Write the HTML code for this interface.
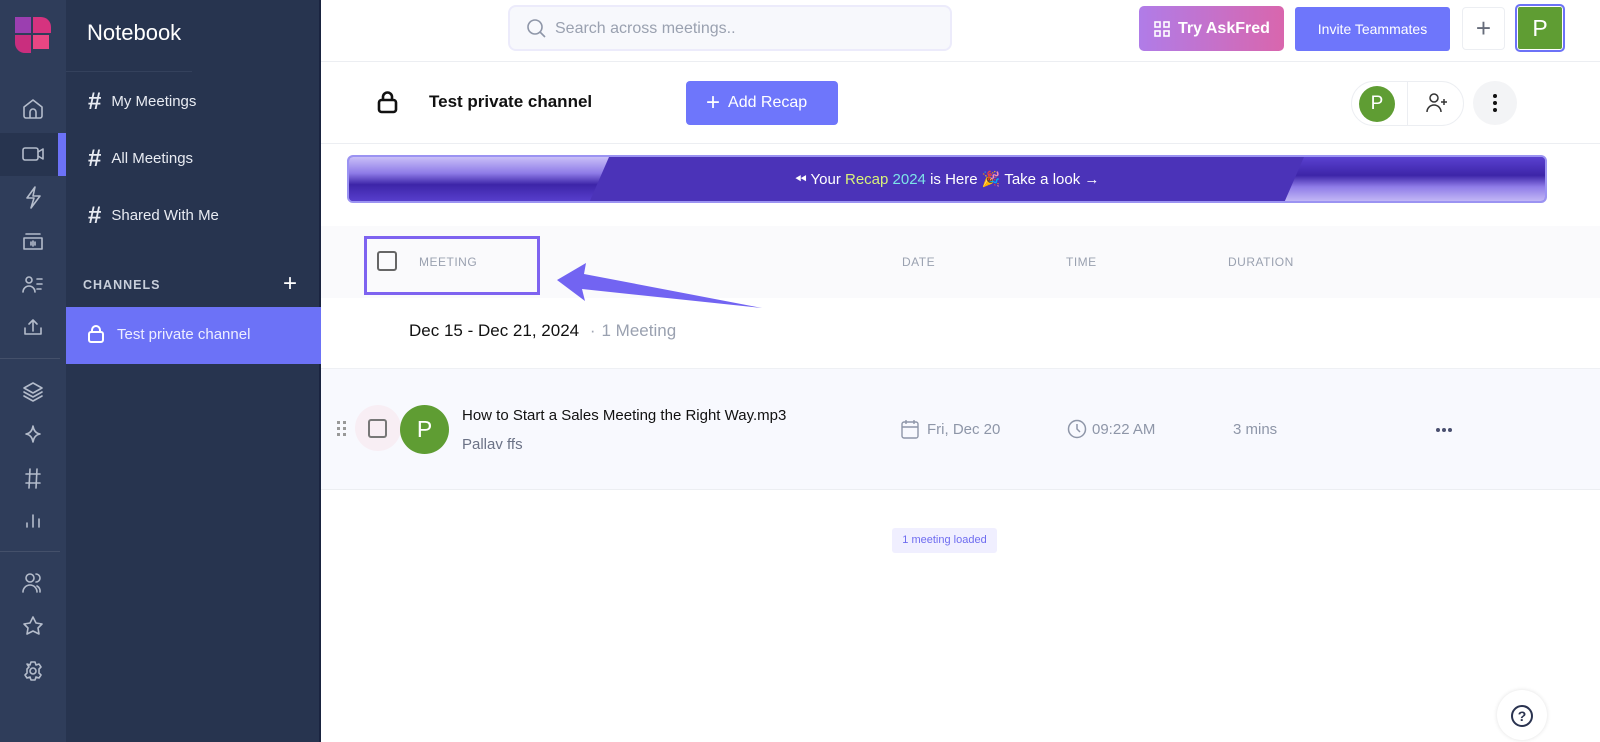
<!DOCTYPE html>
<html><head><meta charset="utf-8"><style>
*{box-sizing:border-box;margin:0;padding:0}
body{width:1600px;height:742px;overflow:hidden;font-family:"Liberation Sans",sans-serif;background:#fff;position:relative}
.abs{position:absolute}
.rail{left:0;top:0;width:66px;height:742px;background:#2f3d5a}
.panel{left:66px;top:0;width:255px;height:742px;background:#27344f;border-right:2px solid #1a2440}
.nav{position:absolute;left:22px;color:#e8ebf2;font-size:15px}
.nav b{font-size:24px;margin-right:10px;vertical-align:-3px}
svg{display:block}
.g{color:#8e96a8}
</style></head><body>
<div class="abs rail"></div>
<div class="abs panel"></div>
<svg class="abs" style="left:15px;top:17px" width="36" height="36" viewBox="0 0 36 36">
<path d="M0 0h16v16H0z" fill="#9b3fb0"/><path d="M18 0h8a10 10 0 0 1 10 10v6H18z" fill="#d6337f"/>
<path d="M0 18h16v18h-6A10 10 0 0 1 0 26z" fill="#c92e7e"/><path d="M18 18h16v14H18z" fill="#e84683"/></svg>
<div class="abs" style="left:0;top:133px;width:58px;height:43px;background:#27344f"></div>
<div class="abs" style="left:58px;top:133px;width:8px;height:43px;background:#6c72f7"></div>
<div class="abs" style="left:0;top:358px;width:60px;height:1px;background:#44506a"></div>
<div class="abs" style="left:0;top:551px;width:60px;height:1px;background:#44506a"></div>
<svg class="abs" style="left:0;top:0" width="66" height="742" fill="none" stroke="#b4bccb" stroke-width="1.6" stroke-linecap="round" stroke-linejoin="round">
<path d="M24 116v-9l9-7 9 7v9a2 2 0 0 1-2 2H26a2 2 0 0 1-2-2zM30 118v-6a3 3 0 0 1 6 0v6"/>
<rect x="23" y="148" width="15" height="12" rx="2"/><path d="M38 152l5-3v10l-5-3"/>
<path d="M35 187l-8 11h7l-3 10 9-12h-7z"/>
<path d="M26 234h14M24 238h18v11H24zM33 241v5M31 242v3M35 242v3"/>
<circle cx="29" cy="280" r="3"/><path d="M23 292a6 6 0 0 1 12 0M37 279h5M37 284h5M37 289h4"/>
<path d="M25 328v6h16v-6M33 331v-11M29 324l4-4 4 4"/>
<path d="M33 383l-9 5 9 5 9-5zM24 392l9 5 9-5M24 396l9 5 9-5"/>
<path d="M33 426q1 7 7 8q-6 1-7 8q-1-7-7-8q6-1 7-8z"/>
<path d="M26 474h14M26 483h14M30 469l-1 19M37 469l-1 19"/>
<path d="M27 527v-4M33 527v-12M39 527v-8"/>
<circle cx="30" cy="578" r="4"/><path d="M23 592a7 7 0 0 1 14 0M36 574a4 4 0 0 1 0 8M40 592a6 6 0 0 0-3-6"/>
<path d="M33 617l3 6 6 1-4 4 1 6-6-3-6 3 1-6-4-4 6-1z"/>
<circle cx="33" cy="671" r="3"/><path d="M31 662h4l1 3 3-1 2 3-2 2v4l2 2-2 3-3-1-1 3h-4l-1-3-3 1-2-3 2-2v-4l2-2-2-3 3 1z"/>
</svg>
<div class="abs" style="left:87px;top:20px;color:#fff;font-size:22px">Notebook</div>
<div class="abs" style="left:66px;top:71px;width:126px;height:1px;background:#34415c"></div>
<div class="nav" style="left:88px;top:88px"><b>#</b>My Meetings</div>
<div class="nav" style="left:88px;top:145px"><b>#</b>All Meetings</div>
<div class="nav" style="left:88px;top:202px"><b>#</b>Shared With Me</div>
<div class="abs" style="left:83px;top:278px;color:#c8cfdb;font-size:12.5px;font-weight:bold;letter-spacing:1px">CHANNELS</div>
<div class="abs" style="left:283px;top:270px;color:#fff;font-size:24px">+</div>
<div class="abs" style="left:66px;top:307px;width:255px;height:57px;background:#6c72f7"></div>
<svg class="abs" style="left:88px;top:325px" width="16" height="18" fill="none" stroke="#fff" stroke-width="2"><rect x="1" y="7" width="14" height="10" rx="2"/><path d="M4 7V5a4 4 0 0 1 8 0v2"/></svg>
<div class="abs" style="left:117px;top:326px;color:#eef;font-size:15px">Test private channel</div>
<div class="abs" style="left:321px;top:61px;width:1279px;height:1px;background:#eceef2"></div>
<div class="abs" style="left:508px;top:5px;width:444px;height:46px;background:#f7f8fc;border:2px solid #ecebfb;border-radius:8px"></div>
<svg class="abs" style="left:526px;top:18px" width="20" height="20" fill="none" stroke="#8e96a8" stroke-width="1.6"><circle cx="9" cy="9" r="7"/><path d="M14 14l5 5"/></svg>
<div class="abs" style="left:555px;top:20px;font-size:16px;color:#9aa1b0">Search across meetings..</div>
<div class="abs" style="left:1139px;top:6px;width:145px;height:45px;border-radius:5px;background:linear-gradient(90deg,#b07ce8,#d966ad);display:flex;align-items:center;color:#fff;font-size:16px;font-weight:bold">
<svg style="margin:0 8px 0 15px" width="16" height="16" fill="none" stroke="#fff" stroke-width="1.6"><rect x="1" y="1" width="5" height="5"/><rect x="10" y="1" width="5" height="5"/><rect x="1" y="10" width="5" height="5"/><rect x="10" y="10" width="5" height="5"/></svg>Try AskFred</div>
<div class="abs" style="left:1295px;top:7px;width:155px;height:44px;border-radius:3px;background:#6e76fb;color:#fff;font-size:14px;text-align:center;line-height:44px">Invite Teammates</div>
<div class="abs" style="left:1462px;top:7px;width:43px;height:43px;border:1px solid #eceef2;border-radius:4px;color:#666c7a;font-size:26px;text-align:center;line-height:40px">+</div>
<div class="abs" style="left:1515px;top:4px;width:50px;height:48px;border:2px solid #6c72f7;border-radius:5px;background:#5f9d33;color:#fff;font-size:23px;text-align:center;line-height:44px;box-shadow:inset 0 0 0 1px #fff">P</div>
<svg class="abs" style="left:377px;top:90px" width="22" height="24" fill="none" stroke="#111" stroke-width="2.6"><rect x="2" y="10" width="17" height="12" rx="2.5"/><path d="M6 10V7a4.5 4.5 0 0 1 9 0v3"/></svg>
<div class="abs" style="left:429px;top:92px;color:#111;font-size:17px;font-weight:bold">Test private channel</div>
<div class="abs" style="left:686px;top:81px;width:152px;height:44px;background:#6e76fb;border-radius:4px;color:#fff;font-size:16px;line-height:44px"><span style="font-size:24px;margin:0 8px 0 20px;vertical-align:-3px">+</span>Add Recap</div>
<div class="abs" style="left:1351px;top:81px;width:113px;height:45px;border:1px solid #eceef2;border-radius:23px"></div>
<div class="abs" style="top:82px;width:1px;height:43px;background:#eceef2;left:1407px"></div>
<div class="abs" style="left:1359px;top:86px;width:36px;height:36px;border-radius:50%;background:#5f9d33;color:#fff;font-size:19px;text-align:center;line-height:36px">P</div>
<svg class="abs" style="left:1425px;top:92px" width="24" height="22" fill="none" stroke="#333" stroke-width="1.5"><circle cx="9" cy="6" r="4"/><path d="M2 20a7 7 0 0 1 14 0M19 7v6M16 10h6"/></svg>
<div class="abs" style="left:1473px;top:81px;width:44px;height:44px;border-radius:50%;background:#f3f4f6"></div>
<div class="abs" style="left:1493px;top:94px;width:4px;height:4px;border-radius:50%;background:#111;box-shadow:0 7px 0 #111,0 14px 0 #111"></div>
<div class="abs" style="left:321px;top:143px;width:1279px;height:1px;background:#eceef2"></div>
<div class="abs" style="left:347px;top:155px;width:1200px;height:48px;border:2px solid #9b93f2;border-radius:6px;background:#4b33b8;overflow:hidden">
<div class="abs" style="left:0;top:0;width:260px;height:46px;background:linear-gradient(180deg,#c9bff7 0%,#8f7ce8 35%,#3d25a8 60%,#5a41d0 100%);clip-path:polygon(0 0,260px 0,240px 46px,0 46px)"></div>
<div class="abs" style="left:935px;top:0;width:265px;height:46px;background:linear-gradient(0deg,#c9bff7 0%,#8f7ce8 35%,#3d25a8 60%,#5a41d0 100%);clip-path:polygon(20px 0,265px 0,265px 46px,0 46px)"></div>
<div class="abs" style="left:0;top:13px;width:1196px;text-align:center;color:#fff;font-size:15px">⏪︎ Your <span style="color:#d8f27a">Recap</span> <span style="color:#7de3e8">2024</span> is Here 🎉 Take a look →</div>
</div>
<div class="abs" style="left:321px;top:226px;width:1279px;height:72px;background:#fafafc"></div>
<div class="abs" style="left:364px;top:236px;width:176px;height:59px;border:3px solid #7e63f0"></div>
<div class="abs" style="left:377px;top:251px;width:20px;height:20px;border:2px solid #666;border-radius:3px"></div>
<div class="abs" style="top:255px;left:419px;font-size:12px;color:#9aa1b0;letter-spacing:.5px">MEETING</div>
<div class="abs" style="top:255px;left:902px;font-size:12px;color:#9aa1b0;letter-spacing:.5px">DATE</div>
<div class="abs" style="top:255px;left:1066px;font-size:12px;color:#9aa1b0;letter-spacing:.5px">TIME</div>
<div class="abs" style="top:255px;left:1228px;font-size:12px;color:#9aa1b0;letter-spacing:.5px">DURATION</div>
<svg class="abs" style="left:550px;top:260px" width="215" height="50"><path d="M7 20L36 3l-2 11 178 34-180-19 3 12z" fill="#7264f2"/></svg>
<div class="abs" style="left:409px;top:321px;font-size:17px;color:#111">Dec 15 - Dec 21, 2024 <span style="color:#a0a6b3;margin:0 6px">·</span><span style="color:#9aa1b0">1 Meeting</span></div>
<div class="abs" style="left:321px;top:368px;width:1279px;height:122px;background:#f8f9fe;border-top:1px solid #eef0f4;border-bottom:1px solid #eceef2"></div>
<div class="abs" style="left:337px;top:421px;width:3px;height:3px;background:#999;box-shadow:6px 0 #999,0 6px #999,6px 6px #999,0 12px #999,6px 12px #999"></div>
<div class="abs" style="left:355px;top:405px;width:46px;height:46px;border-radius:50%;background:#f8eef4"></div>
<div class="abs" style="left:368px;top:419px;width:19px;height:19px;border:2px solid #777;border-radius:3px"></div>
<div class="abs" style="left:400px;top:405px;width:49px;height:49px;border-radius:50%;background:#5f9d33;color:#fff;font-size:23px;text-align:center;line-height:49px">P</div>
<div class="abs" style="left:462px;top:407px;font-size:15px;color:#111">How to Start a Sales Meeting the Right Way.mp3</div>
<div class="abs" style="left:462px;top:436px;font-size:15px;color:#6b7286">Pallav ffs</div>
<svg class="abs" style="left:901px;top:419px" width="18" height="20" fill="none" stroke="#8e96a8" stroke-width="1.4"><rect x="1" y="3" width="16" height="16" rx="2"/><path d="M1 8h16M5 1v4M13 1v4"/></svg>
<div class="abs g" style="left:927px;top:421px;font-size:15px">Fri, Dec 20</div>
<svg class="abs" style="left:1067px;top:419px" width="20" height="20" fill="none" stroke="#8e96a8" stroke-width="1.5"><circle cx="10" cy="10" r="8.5"/><path d="M10 5v5l3 3"/></svg>
<div class="abs g" style="left:1092px;top:421px;font-size:15px">09:22 AM</div>
<div class="abs g" style="left:1233px;top:421px;font-size:15px">3 mins</div>
<div class="abs" style="left:1436px;top:428px;width:4px;height:4px;border-radius:50%;background:#4a5070;box-shadow:6px 0 #4a5070,12px 0 #4a5070"></div>
<div class="abs" style="left:892px;top:528px;width:105px;height:25px;background:#f0efff;border-radius:3px;color:#6e6cf0;font-size:11px;text-align:center;line-height:25px">1 meeting loaded</div>
<div class="abs" style="left:1497px;top:690px;width:50px;height:50px;border-radius:50%;background:#fff;box-shadow:0 0 4px rgba(0,0,0,.12)"></div>
<div class="abs" style="left:1511px;top:705px;width:22px;height:22px;border:2px solid #2a3350;border-radius:50%;text-align:center;font-size:14px;font-weight:bold;line-height:18px;color:#2a3350">?</div>
</body></html>
